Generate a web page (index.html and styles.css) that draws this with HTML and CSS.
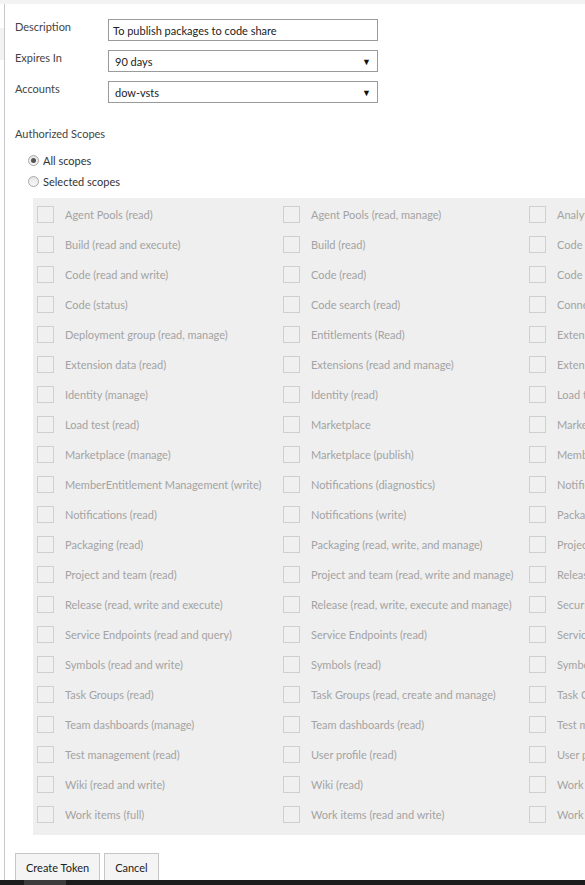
FILE: index.html
```html
<!DOCTYPE html>
<html>
<head>
<meta charset="utf-8">
<link rel="stylesheet" href="styles.css">
</head>
<body>
<div class="topbar"></div>
<div class="shell">
  <div class="rail"><div class="rail-block"></div></div>
  <div class="page">
    <div class="form">
      <label class="lbl">Description</label>
      <div class="input">To publish packages to code share</div>
      <label class="lbl">Expires In</label>
      <div class="input select"><span>90 days</span><span class="arrow">▼</span></div>
      <label class="lbl">Accounts</label>
      <div class="input select"><span>dow-vsts</span><span class="arrow">▼</span></div>
    </div>

    <div class="heading">Authorized Scopes</div>
    <div class="radios">
      <div class="radio-row"><span class="radio checked"></span><span>All scopes</span></div>
      <div class="radio-row"><span class="radio"></span><span>Selected scopes</span></div>
    </div>

    <div class="panel">
      <div class="grid" id="grid">
        <div class="item"><span class="cb"></span><span>Agent Pools (read)</span></div>
        <div class="item"><span class="cb"></span><span>Agent Pools (read, manage)</span></div>
        <div class="item"><span class="cb"></span><span>Analytics (read)</span></div>
        <div class="item"><span class="cb"></span><span>Build (read and execute)</span></div>
        <div class="item"><span class="cb"></span><span>Build (read)</span></div>
        <div class="item"><span class="cb"></span><span>Code (full)</span></div>
        <div class="item"><span class="cb"></span><span>Code (read and write)</span></div>
        <div class="item"><span class="cb"></span><span>Code (read)</span></div>
        <div class="item"><span class="cb"></span><span>Code (read, write, and manage)</span></div>
        <div class="item"><span class="cb"></span><span>Code (status)</span></div>
        <div class="item"><span class="cb"></span><span>Code search (read)</span></div>
        <div class="item"><span class="cb"></span><span>Connected server</span></div>
        <div class="item"><span class="cb"></span><span>Deployment group (read, manage)</span></div>
        <div class="item"><span class="cb"></span><span>Entitlements (Read)</span></div>
        <div class="item"><span class="cb"></span><span>Extension data (read and write)</span></div>
        <div class="item"><span class="cb"></span><span>Extension data (read)</span></div>
        <div class="item"><span class="cb"></span><span>Extensions (read and manage)</span></div>
        <div class="item"><span class="cb"></span><span>Extensions (read)</span></div>
        <div class="item"><span class="cb"></span><span>Identity (manage)</span></div>
        <div class="item"><span class="cb"></span><span>Identity (read)</span></div>
        <div class="item"><span class="cb"></span><span>Load test (read and write)</span></div>
        <div class="item"><span class="cb"></span><span>Load test (read)</span></div>
        <div class="item"><span class="cb"></span><span>Marketplace</span></div>
        <div class="item"><span class="cb"></span><span>Marketplace (acquire)</span></div>
        <div class="item"><span class="cb"></span><span>Marketplace (manage)</span></div>
        <div class="item"><span class="cb"></span><span>Marketplace (publish)</span></div>
        <div class="item"><span class="cb"></span><span>MemberEntitlement Management (read)</span></div>
        <div class="item"><span class="cb"></span><span>MemberEntitlement Management (write)</span></div>
        <div class="item"><span class="cb"></span><span>Notifications (diagnostics)</span></div>
        <div class="item"><span class="cb"></span><span>Notifications (manage)</span></div>
        <div class="item"><span class="cb"></span><span>Notifications (read)</span></div>
        <div class="item"><span class="cb"></span><span>Notifications (write)</span></div>
        <div class="item"><span class="cb"></span><span>Packaging (read and write)</span></div>
        <div class="item"><span class="cb"></span><span>Packaging (read)</span></div>
        <div class="item"><span class="cb"></span><span>Packaging (read, write, and manage)</span></div>
        <div class="item"><span class="cb"></span><span>Project and team (read and write)</span></div>
        <div class="item"><span class="cb"></span><span>Project and team (read)</span></div>
        <div class="item"><span class="cb"></span><span>Project and team (read, write and manage)</span></div>
        <div class="item"><span class="cb"></span><span>Release (read)</span></div>
        <div class="item"><span class="cb"></span><span>Release (read, write and execute)</span></div>
        <div class="item"><span class="cb"></span><span>Release (read, write, execute and manage)</span></div>
        <div class="item"><span class="cb"></span><span>Security (manage)</span></div>
        <div class="item"><span class="cb"></span><span>Service Endpoints (read and query)</span></div>
        <div class="item"><span class="cb"></span><span>Service Endpoints (read)</span></div>
        <div class="item"><span class="cb"></span><span>Service Endpoints (read, query and manage)</span></div>
        <div class="item"><span class="cb"></span><span>Symbols (read and write)</span></div>
        <div class="item"><span class="cb"></span><span>Symbols (read)</span></div>
        <div class="item"><span class="cb"></span><span>Symbols (read, write and manage)</span></div>
        <div class="item"><span class="cb"></span><span>Task Groups (read)</span></div>
        <div class="item"><span class="cb"></span><span>Task Groups (read, create and manage)</span></div>
        <div class="item"><span class="cb"></span><span>Task Groups (read, create)</span></div>
        <div class="item"><span class="cb"></span><span>Team dashboards (manage)</span></div>
        <div class="item"><span class="cb"></span><span>Team dashboards (read)</span></div>
        <div class="item"><span class="cb"></span><span>Test management (read and write)</span></div>
        <div class="item"><span class="cb"></span><span>Test management (read)</span></div>
        <div class="item"><span class="cb"></span><span>User profile (read)</span></div>
        <div class="item"><span class="cb"></span><span>User profile (write)</span></div>
        <div class="item"><span class="cb"></span><span>Wiki (read and write)</span></div>
        <div class="item"><span class="cb"></span><span>Wiki (read)</span></div>
        <div class="item"><span class="cb"></span><span>Work items (read)</span></div>
        <div class="item"><span class="cb"></span><span>Work items (full)</span></div>
        <div class="item"><span class="cb"></span><span>Work items (read and write)</span></div>
        <div class="item"><span class="cb"></span><span>Work items (read, write and manage)</span></div>
      </div>
    </div>

    <div class="buttons">
      <button class="btn">Create Token</button>
      <button class="btn">Cancel</button>
    </div>
  </div>
</div>
<div class="taskbar"><div class="taskbar-item"></div></div>
</body>
</html>
```

FILE: styles.css
```css
html, body {
  margin: 0;
  padding: 0;
  overflow: hidden;
  background: #ffffff;
}
body {
  font-family: Lato, "Open Sans", sans-serif;
  font-size: 11px;
  color: #333333;
  width: 585px;
  height: 885px;
}
.topbar {
  height: 4px;
  background: #f3f3f3;
}
.shell {
  display: flex;
}
.rail {
  width: 4px;
  flex: none;
}
.rail-block {
  margin-top: 24px;
  height: 32px;
  background: #f2f2f2;
}
.page {
  flex: none;
  width: 900px;
  border-left: 1px solid #c8c8c8;
  padding: 15px 0 0 10px;
  min-height: 900px;
}
.form {
  display: grid;
  grid-template-columns: 93px 270px;
  row-gap: 9px;
}
.lbl {
  line-height: 16px;
  color: #444444;
}
.input {
  height: 20px;
  border: 1px solid #9a9a9a;
  line-height: 21px;
  padding: 0 4px;
  color: #222222;
  background: #fff;
}
.select {
  display: flex;
  justify-content: space-between;
  padding: 0 6px 0 6px;
}
.arrow {
  font-size: 9px;
  color: #111;
}
.heading {
  margin-top: 23px;
  line-height: 16px;
  color: #444444;
}
.radios {
  margin-top: 8px;
  padding-left: 13px;
}
.radio-row {
  display: flex;
  align-items: center;
  height: 21px;
  gap: 4px;
  color: #333;
}
.radio {
  width: 9px;
  height: 9px;
  border-radius: 50%;
  border: 1px solid #a8a8a8;
  background: linear-gradient(#e6e6e6, #f8f8f8);
  position: relative;
}
.radio.checked::after {
  content: "";
  position: absolute;
  left: 2px;
  top: 2px;
  width: 5px;
  height: 5px;
  border-radius: 50%;
  background: #555555;
}
.panel {
  margin-top: 6px;
  margin-left: 18px;
  background: #efefef;
  padding: 1px 0 6px 4px;
  width: 760px;
}
.grid {
  display: grid;
  grid-template-columns: repeat(3, 246px);
}
.item {
  height: 30px;
  display: flex;
  align-items: center;
  gap: 11px;
  color: #a3a3a3;
  white-space: nowrap;
}
.cb {
  width: 15px;
  height: 15px;
  border: 1px solid #cfcfcf;
  background: #f0f0f0;
  flex: none;
}
.buttons {
  margin-top: 18px;
  display: flex;
  gap: 4px;
}
.btn {
  font-family: inherit;
  font-size: 11px;
  color: #222;
  height: 28px;
  padding: 0 10px;
  border: 1px solid #c6c6c6;
  background: #f4f4f4;
}
.taskbar {
  position: fixed;
  left: 0;
  right: 0;
  bottom: 0;
  height: 5px;
  background: #1c1c1c;
}
.taskbar-item {
  margin-left: 24px;
  width: 42px;
  height: 5px;
  background: #3c3c3c;
}
```
